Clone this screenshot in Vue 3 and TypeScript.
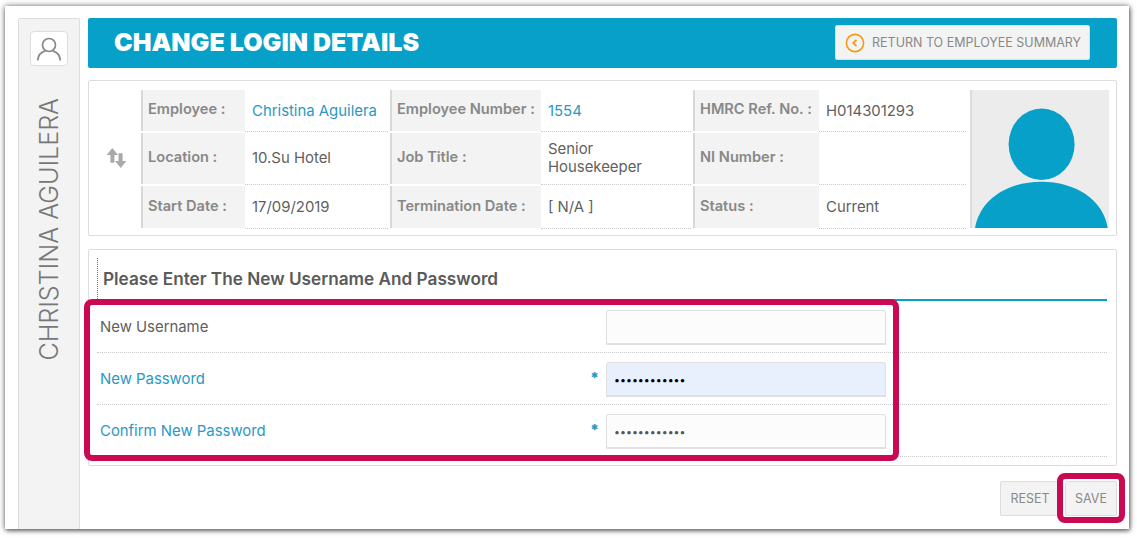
<script setup lang="ts">
interface Cell { label: string; value: string; link?: boolean }
const rows: Cell[][] = [
  [
    { label: 'Employee :', value: 'Christina Aguilera', link: true },
    { label: 'Employee Number :', value: '1554', link: true },
    { label: 'HMRC Ref. No. :', value: 'H014301293' },
  ],
  [
    { label: 'Location :', value: '10.Su Hotel' },
    { label: 'Job Title :', value: 'Senior Housekeeper' },
    { label: 'NI Number :', value: '' },
  ],
  [
    { label: 'Start Date :', value: '17/09/2019' },
    { label: 'Termination Date :', value: '[ N/A ]' },
    { label: 'Status :', value: 'Current' },
  ],
]
const fields = [
  { label: 'New Username', type: 'text', value: '', required: false, cls: '' },
  { label: 'New Password', type: 'password', value: 'abcdefghijkl', required: true, cls: 'autofill' },
  { label: 'Confirm New Password', type: 'password', value: 'abcdefghijkl', required: true, cls: '' },
]
</script>

<template>
  <div class="page">
    <div class="frame">
      <aside class="side">
        <div class="avatar">
          <svg width="26" height="26" viewBox="0 0 26 26" fill="none" stroke="#888" stroke-width="1.7">
            <circle cx="13" cy="9" r="6.5" />
            <path d="M1.8 24.5c.3-5.6 3.6-8.6 7.6-9.6M24.2 24.5c-.3-5.6-3.6-8.6-7.6-9.6" />
          </svg>
        </div>
        <div class="vname">CHRISTINA AGUILERA</div>
      </aside>
      <main class="main">
        <header class="banner">
          <h1>CHANGE LOGIN DETAILS</h1>
          <button class="back">
            <svg width="20" height="20" viewBox="0 0 20 20" fill="none" stroke="#f59a0c" stroke-width="1.6">
              <circle cx="10" cy="10" r="8.6" />
              <path d="M11.5 6.8 8.3 10l3.2 3.2" stroke-width="1.8" />
            </svg>
            RETURN TO EMPLOYEE SUMMARY
          </button>
        </header>

        <section class="card info">
          <div class="swap">
            <svg width="21" height="20" viewBox="0 0 20 19" fill="#a9a9a9">
              <path d="M6 0 11.5 6.6H8V14H4.2V6.6H.6Z" />
              <path d="M14 19 8.6 12.4h3.3V5h3.9v7.4h3.6Z" />
            </svg>
          </div>
          <div class="grid">
            <template v-for="(row, r) in rows" :key="r">
              <template v-for="(c, i) in row" :key="i">
                <div class="lab" :class="'r' + r">{{ c.label }}</div>
                <div class="val" :class="[{ link: c.link }, 'r' + r]">{{ c.value }}</div>
              </template>
            </template>
          </div>
          <div class="photo">
            <svg width="137" height="137" viewBox="0 0 137 137" fill="#07a0c9">
              <ellipse cx="69.6" cy="53.3" rx="33" ry="35.7" />
              <path d="M3 137C8 108 36 90.7 69.5 90.7S131 108 135.7 137Z" />
            </svg>
          </div>
        </section>

        <section class="card form">
          <h2>Please Enter The New Username And Password</h2>
          <div v-for="f in fields" :key="f.label" class="row">
            <label :class="{ req: f.required }">{{ f.label }}</label>
            <span class="star">{{ f.required ? '*' : '' }}</span>
            <input :type="f.type" :value="f.value" :class="f.cls" readonly />
          </div>
        </section>

        <footer class="actions">
          <button>RESET</button>
          <button>SAVE</button>
        </footer>
      </main>
      <div class="mark mark-form"></div>
      <div class="mark mark-save"></div>
    </div>
  </div>
</template>

<style>
html, body { margin: 0; background: #fff; }
</style>

<style scoped>
.page {
  width: 1137px;
  height: 538px;
  overflow: hidden;
  padding: 6px 8px 9px 5px;
  box-sizing: border-box;
  font-family: Inter, "Liberation Sans", sans-serif;
  font-size: 14.9px;
  color: #5f5f5f;
}
.frame {
  position: relative;
  height: 100%;
  box-sizing: border-box;
  background: #fff;
  box-shadow: 0 0 6px rgba(0, 0, 0, .55), 1px 2px 4px rgba(0, 0, 0, .4);
  padding: 12px 12px 0 13px;
  display: flex;
  gap: 8px;
}
.side {
  width: 62px;
  flex: none;
  box-sizing: border-box;
  background: #f3f3f3;
  border: 1px solid #dedede;
  border-bottom: 0;
  border-radius: 2px 2px 0 0;
  padding-top: 12px;
  display: flex;
  flex-direction: column;
  align-items: center;
}
.avatar {
  width: 38px;
  height: 35px;
  box-sizing: border-box;
  background: #fff;
  border: 1px solid #ddd;
  border-radius: 4px;
  display: flex;
  align-items: center;
  justify-content: center;
}
.vname {
  margin-top: 32px;
  writing-mode: vertical-rl;
  transform: rotate(180deg);
  font-size: 25.1px;
  font-weight: 300;
  color: #777;
  white-space: nowrap;
  line-height: 26px;
}
.main { flex: 1; min-width: 0; }
.banner {
  height: 50px;
  background: #07a0c9;
  border-radius: 2px;
  padding: 6px 27px 8px 26px;
  box-sizing: border-box;
  display: flex;
  align-items: center;
  justify-content: space-between;
}
h1 {
  margin: 0;
  color: #fff;
  font-size: 25px;
  font-weight: 900;
}
.back {
  height: 35px;
  width: 255px;
  margin-top: 1px;
  box-sizing: border-box;
  background: #f3f3f3;
  border: 1px solid #ddd;
  border-radius: 2px;
  font: 400 12.5px Inter, "Liberation Sans", sans-serif;
  color: #888;
  display: flex;
  align-items: center;
  gap: 7px;
  padding: 0 0 0 9px;
  white-space: nowrap;
}
.card {
  background: #fff;
  border: 1px solid #ddd;
  border-radius: 2px;
  box-sizing: border-box;
}
.info {
  margin-top: 12px;
  height: 156px;
  padding: 9px 7px 7px 0;
  display: flex;
}
.swap {
  width: 52px;
  flex: none;
  display: flex;
  align-items: center;
  justify-content: center;
  padding: 0 0 2px 3px;
  box-sizing: border-box;
}
.grid {
  width: 827px;
  flex: none;
  display: grid;
  grid-template-columns: 104px 145px 151px 152px 126px 149px;
  grid-template-rows: 41px 51px 42px;
  row-gap: 2px;
}
.lab {
  background: #f3f3f3;
  border-left: 2px solid #d8d8d8;
  padding: 0 0 4px 5px;
  color: #888;
  font-weight: 600;
  font-size: 14.6px;
  display: flex;
  align-items: center;
  box-sizing: border-box;
  white-space: nowrap;
}
.lab.r2 { padding-bottom: 3px; }
.val {
  padding: 0 8px 0 7px;
  display: flex;
  align-items: center;
  line-height: 18px;
  box-sizing: border-box;
  border-bottom: 1px dotted #c8c8c8;
  margin-right: 2px;
  margin-bottom: -1px;
}
.val.r1 { padding-bottom: 2px; }
.link { color: #2a98c6; }
.photo {
  width: 139px;
  flex: none;
  margin-left: 2px;
  box-sizing: border-box;
  background: #ececec;
  border-left: 2px solid #dcdcdc;
  display: flex;
  align-items: flex-end;
  overflow: hidden;
}
.photo svg { display: block; flex: none; }
.form {
  margin-top: 13px;
  height: 217px;
  padding: 8px 9px 0 8px;
}
h2 {
  margin: 0;
  height: 43px;
  box-sizing: border-box;
  padding: 9px 0 0 5px;
  font-size: 17.2px;
  font-weight: 600;
  line-height: 24px;
  color: #5a5a5a;
  border-left: 1px dotted #07a0c9;
  border-bottom: 2px solid #07a0c9;
}
.row {
  height: 52px;
  box-sizing: border-box;
  border-bottom: 1px dotted #c8c8c8;
  display: flex;
  align-items: center;
  padding-left: 3px;
  padding-top: 2px;
}
.row label { flex: 1; padding-bottom: 1px; }
.row label.req { color: #2a98c6; }
.star {
  width: 15px;
  color: #2a98c6;
  font-weight: 900;
  font-size: 15px;
  padding-bottom: 4px;
  margin-left: -1px;
  margin-right: 1px;
}
input {
  width: 280px;
  height: 35px;
  margin-right: 221px;
  box-sizing: border-box;
  background: #fcfcfc;
  border: 1px solid #e0e0e0;
  border-bottom-width: 2px;
  border-radius: 3px 3px 0 0;
  padding: 2px 7px 0;
  outline: 0;
  color: #555;
  font: 400 10.6px Inter, "Liberation Sans", sans-serif;
}
input.autofill { background: #e8f0fe; color: #000; }
.actions {
  display: flex;
  justify-content: flex-end;
  gap: 5px;
  margin-top: 15px;
}
.actions button {
  height: 35px;
  box-sizing: border-box;
  background: #f3f3f3;
  border: 1px solid #ddd;
  border-radius: 2px;
  color: #888;
  font: 400 12.5px Inter, "Liberation Sans", sans-serif;
  padding: 0;
  width: 60px;
}
.actions button:last-child { width: 52px; }
.mark {
  position: absolute;
  box-sizing: border-box;
  border: 6px solid #c90a52;
  border-radius: 8px;
  pointer-events: none;
}
.mark-form { left: 79px; top: 293px; width: 815px; height: 162px; }
.mark-save { left: 1052px; top: 467px; width: 68px; height: 50px; }
</style>
